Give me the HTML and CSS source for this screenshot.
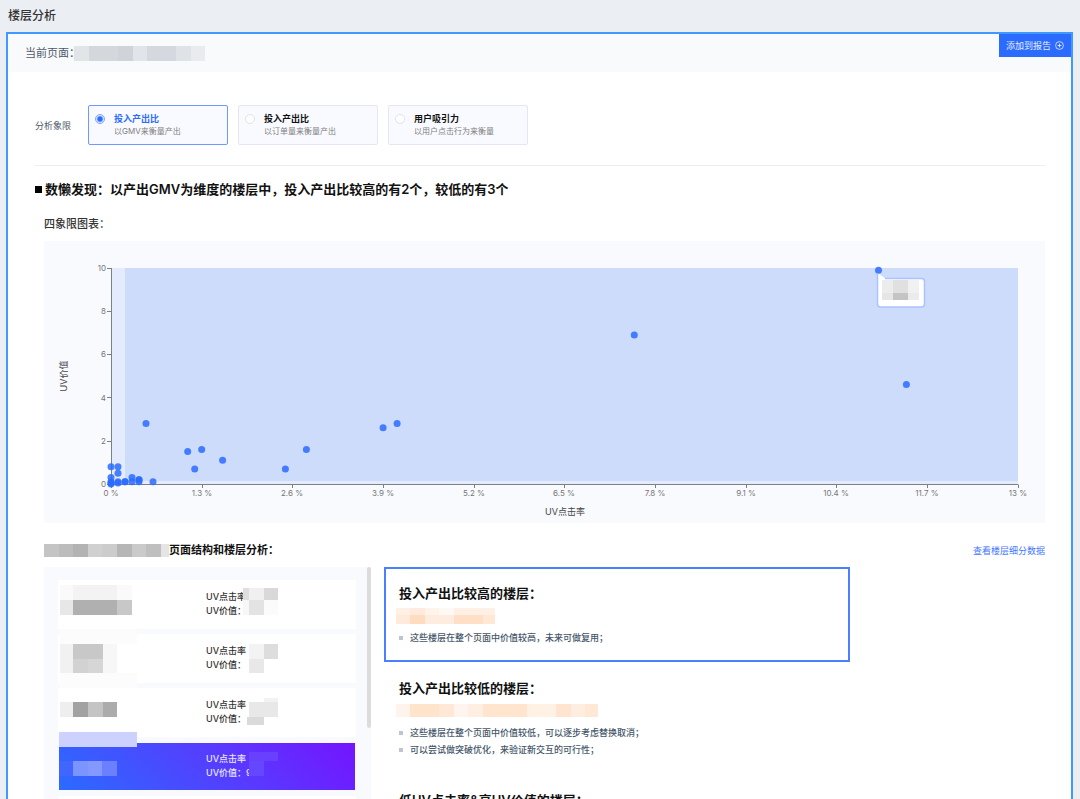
FILE: index.html
```
<!DOCTYPE html>
<html lang="zh-CN">
<head>
<meta charset="utf-8">
<title>楼层分析</title>
<link rel="stylesheet" href="styles.css">
</head>
<body>
<div class="page">
  <h1 class="page-title">楼层分析</h1>
  <main class="panel">
    <header class="panel-head">
      <div class="current">
        <span>当前页面：</span>
        <svg class="mask" width="131" height="15" shape-rendering="crispEdges" aria-hidden="true">
          <path fill="#e2e5e8" d="M0 0h15v15H0z"/><path fill="#d4d8dd" d="M15 0h29v15H15z"/><path fill="#d0d4da" d="M44 0h15v15H44z"/><path fill="#e1e4e8" d="M59 0h14v15H59z"/><path fill="#d5d9df" d="M73 0h29v15H73z"/><path fill="#dfe2e7" d="M102 0h15v15H102z"/><path fill="#e9ebee" d="M117 0h14v15H117z"/>
        </svg>
      </div>
      <button class="add" type="button">添加到报告
        <svg width="9" height="9" viewBox="0 0 9 9" fill="none" stroke="currentColor" aria-hidden="true"><circle cx="4.500" cy="4.500" r="3.900" stroke-width=".8"/><path d="M4.500 2.600v3.800M2.600 4.500h3.800" stroke-width=".9"/></svg>
      </button>
    </header>

    <div class="content">
      <div class="filters" role="radiogroup" aria-labelledby="quad">
        <span class="filters-label" id="quad">分析象限</span>
        <label class="option"><input type="radio" name="quadrant" checked><span class="option-text"><b>投入产出比</b><small>以GMV来衡量产出</small></span></label>
        <label class="option"><input type="radio" name="quadrant"><span class="option-text"><b>投入产出比</b><small>以订单量来衡量产出</small></span></label>
        <label class="option"><input type="radio" name="quadrant"><span class="option-text"><b>用户吸引力</b><small>以用户点击行为来衡量</small></span></label>
      </div>

      <h2 class="finding">数懒发现：以产出GMV为维度的楼层中，投入产出比较高的有2个，较低的有3个</h2>

      <section class="inner">
        <h3 class="sub">四象限图表：</h3>
        <svg class="chart" viewBox="0 0 1001 282" role="img" aria-label="UV点击率与UV价值四象限图">
          <rect x="67" y="27" width="907" height="216" fill="#e3ebfd"/>
          <rect x="81" y="27" width="893" height="213" fill="#cedcfc"/>
          <path class="axis" d="M67.500 27V243.500H974.500M63 27.500h4M63 70.500h4M63 113.500h4M63 156.500h4M63 200.500h4M63 243.500h4M67.500 244v3M158.500 244v3M248.500 244v3M339.500 244v3M430.500 244v3M520.500 244v3M611.500 244v3M702.500 244v3M792.500 244v3M883.500 244v3M974.500 244v3"/>
          <g class="tick end">
            <text x="62" y="30">10</text><text x="62" y="73">8</text><text x="62" y="116">6</text><text x="62" y="160">4</text><text x="62" y="203">2</text><text x="62" y="246">0</text>
          </g>
          <g class="tick mid">
            <text x="67" y="255">0 %</text><text x="158" y="255">1.3 %</text><text x="248" y="255">2.6 %</text><text x="339" y="255">3.9 %</text><text x="430" y="255">5.2 %</text><text x="520" y="255">6.5 %</text><text x="611" y="255">7.8 %</text><text x="702" y="255">9.1 %</text><text x="792" y="255">10.4 %</text><text x="883" y="255">11.7 %</text><text x="974" y="255">13 %</text>
          </g>
          <text class="axis-name" x="521" y="274">UV点击率</text>
          <text class="axis-name" transform="translate(23 135) rotate(-90)">UV价值</text>
          <g class="points">
            <circle cx="102" cy="182.500" r="3.500"/><circle cx="143.700" cy="210.600" r="3.500"/><circle cx="150.700" cy="227.900" r="3.500"/><circle cx="157.700" cy="208.400" r="3.500"/><circle cx="178.600" cy="219.200" r="3.500"/><circle cx="241.400" cy="227.900" r="3.500"/><circle cx="262.400" cy="208.400" r="3.500"/><circle cx="339.100" cy="186.800" r="3.500"/><circle cx="353.100" cy="182.500" r="3.500"/><circle cx="590.300" cy="94" r="3.500"/><circle cx="862.400" cy="143.600" r="3.500"/>
            <circle cx="67" cy="225.700" r="3.500"/><circle cx="74" cy="225.700" r="3.500"/><circle cx="74" cy="232.200" r="3.500"/><circle cx="67" cy="236.500" r="3.500"/><circle cx="67" cy="240.800" r="3.500"/><circle cx="67" cy="242" r="3.500"/><circle cx="67" cy="243" r="3.500"/><circle cx="74" cy="240.800" r="3.500"/><circle cx="74" cy="242" r="3.500"/><circle cx="81" cy="240.800" r="3.500"/><circle cx="81" cy="240.800" r="3.500"/><circle cx="88" cy="236.500" r="3.500"/><circle cx="88" cy="240.800" r="3.500"/><circle cx="95" cy="238.700" r="3.500"/><circle cx="95" cy="238.700" r="3.500"/><circle cx="95" cy="240.800" r="3.500"/><circle cx="109" cy="240.800" r="3.500"/>
          </g>
          <path d="M834 32L841 37.500H877.500a3 3 0 0 1 3 3V63a3 3 0 0 1-3 3H836.500a3 3 0 0 1-3-3V32z" fill="#fff"/>
          <path d="M841 37.500H877.500a3 3 0 0 1 3 3V63a3 3 0 0 1-3 3H836.500a3 3 0 0 1-3-3V33" fill="none" stroke="#a9c3fe" stroke-width="1.500"/>
          <g class="points"><circle cx="834.500" cy="29.200" r="3.500"/></g>
          <g shape-rendering="crispEdges">
            <path fill="#ececec" d="M838 39h11v13h-11z"/><path fill="#e0e0e0" d="M849 39h15v13h-15z"/><path fill="#f1f1f1" d="M864 39h11v13h-11z"/><path fill="#e6e6e6" d="M838 52h11v7h-11z"/><path fill="#c4c4c4" d="M849 52h15v7h-15z"/><path fill="#ebebeb" d="M864 52h11v7h-11z"/>
          </g>
        </svg>

        <div class="section-head">
          <h3 class="sub strong">
            <svg class="mask" width="125" height="13" shape-rendering="crispEdges" aria-hidden="true">
              <path fill="#c4c4c4" d="M0 0h15v13H0z"/><path fill="#bcbcbc" d="M15 0h14v13H15z"/><path fill="#b3b3b3" d="M29 0h15v13H29z"/><path fill="#d0d0d0" d="M44 0h14v13H44z"/><path fill="#ccc" d="M58 0h15v13H58z"/><path fill="#b6b6b6" d="M73 0h15v13H73z"/><path fill="#cacaca" d="M88 0h14v13H88z"/><path fill="#bfbfbf" d="M102 0h15v13H102z"/><path fill="#e5e5e5" d="M117 0h8v13h-8z"/>
            </svg>页面结构和楼层分析：</h3>
          <a class="link" href="#detail">查看楼层细分数据</a>
        </div>

        <div class="columns">
          <div class="floors">
            <ul class="floor-list">
              <li class="floor">
                <p>UV点击率<br>UV价值：</p>
                <svg class="cover" shape-rendering="crispEdges" aria-hidden="true">
                  <path fill="#fafafa" d="M2 5h13v15H2zM59 5h15v15H59z"/><path fill="#f3f3f3" d="M15 5h44v15H15z"/><path fill="#e7e7e7" d="M2 20h13v15H2z"/><path fill="#b0b0b0" d="M15 20h44v15H15z"/><path fill="#c8c8c8" d="M59 20h15v15H59z"/>
                  <path fill="#dedede" d="M185 8h6v12h-6z"/><path fill="#f0f0f0" d="M191 8h15v12h-15z"/><path fill="#d9d9d9" d="M206 8h14v12h-14z"/><path fill="#f7f7f7" d="M185 20h6v15h-6z"/><path fill="#e3e3e3" d="M191 20h15v15h-15z"/><path fill="#fbfbfb" d="M206 20h14v15h-14z"/>
                </svg>
              </li>
              <li class="floor">
                <p>UV点击率<br>UV价值：</p>
                <svg class="cover" shape-rendering="crispEdges" aria-hidden="true">
                  <path fill="#fcfcfd" d="M2-5h77v15H2zM2 39h77v15H2z"/><path fill="#f1f1f1" d="M2 10h13v29H2z"/><path fill="#c8c8c8" d="M15 10h30v15H15z"/><path fill="#f7f7f7" d="M45 10h14v29H45z"/><path fill="#d2d2d2" d="M15 25h15v14H15z"/><path fill="#d6d6d6" d="M30 25h15v14H30z"/>
                  <path fill="#f3f3f3" d="M191 10h15v15h-15z"/><path fill="#ddd" d="M206 10h14v15h-14z"/><path fill="#e8e8e8" d="M191 25h15v14h-15z"/>
                </svg>
              </li>
              <li class="floor">
                <p>UV点击率<br>UV价值：</p>
                <svg class="cover" shape-rendering="crispEdges" aria-hidden="true">
                  <path fill="#eee" d="M2 14h13v15H2z"/><path fill="#a2a2a2" d="M15 14h15v15H15z"/><path fill="#c4c4c4" d="M30 14h15v15H30z"/><path fill="#acacac" d="M45 14h14v15H45z"/>
                  <path fill="#f2f2f2" d="M206 10h14v4h-14z"/><path fill="#e8e8e8" d="M191 14h29v15h-29z"/><path fill="#dadada" d="M189 29h17v8h-17z"/>
                </svg>
              </li>
              <li class="floor active">
                <p>UV点击率<br>UV价值：9</p>
                <svg class="cover" shape-rendering="crispEdges" aria-hidden="true">
                  <path fill="#cdd1fd" d="M0-11h78v15H0z"/><path fill="#4066ff" d="M0 18h14v15H0z"/><path fill="#7b94ff" d="M14 18h15v15H14z"/><path fill="#8498ff" d="M29 18h14v15H29z"/><path fill="#6a80ff" d="M43 18h15v15H43z"/>
                  <path fill="#6a40ff" d="M190 9h29v9h-29z"/><path fill="#6447ff" d="M190 18h15v15h-15z"/>
                </svg>
              </li>
              <li class="floor"></li>
            </ul>
            <span class="thumb"></span>
          </div>

          <div class="insights">
            <section class="insight selected">
              <h4>投入产出比较高的楼层：</h4>
              <svg class="tags" height="26" shape-rendering="crispEdges" aria-hidden="true">
                <path fill="#fff0e6" d="M-3 5h14v7H-3zM55 5h41v7H55z"/><path fill="#ffeadd" d="M11 5h15v7H11z"/><path fill="#fff3ea" d="M26 5h14v7H26z"/><path fill="#fff9f4" d="M40 5h15v7H40z"/><path fill="#ffeadb" d="M-3 12h14v9H-3z"/><path fill="#ffdcc0" d="M11 12h15v9H11z"/><path fill="#ffece0" d="M26 12h29v9H26z"/><path fill="#ffe0c6" d="M55 12h29v9H55z"/><path fill="#ffe8d6" d="M84 12h12v9H84z"/>
              </svg>
              <ul><li>这些楼层在整个页面中价值较高，未来可做复用；</li></ul>
            </section>
            <section class="insight">
              <h4>投入产出比较低的楼层：</h4>
              <svg class="tags" height="26" shape-rendering="crispEdges" aria-hidden="true">
                <path fill="#fff4ec" d="M-3 6h14v13H-3z"/><path fill="#ffe4cc" d="M11 6h29v13H11z"/><path fill="#ffe8d6" d="M40 6h15v13H40z"/><path fill="#fff5ee" d="M55 6h14v13H55z"/><path fill="#ffeee2" d="M69 6h15v13H69z"/><path fill="#ffe4ce" d="M84 6h44v13H84z"/><path fill="#fff1e3" d="M128 6h29v13h-29z"/><path fill="#ffe5d0" d="M157 6h15v13h-15z"/><path fill="#ffeedf" d="M172 6h14v13h-14z"/><path fill="#ffe8d6" d="M186 6h13v13h-13z"/>
              </svg>
              <ul><li>这些楼层在整个页面中价值较低，可以逐步考虑替换取消；</li><li>可以尝试做突破优化，来验证新交互的可行性；</li></ul>
            </section>
            <section class="insight">
              <h4>低UV点击率&amp;高UV价值的楼层：</h4>
            </section>
          </div>
        </div>
      </section>
    </div>
  </main>
</div>
</body>
</html>
```
FILE: styles.css
```
* { box-sizing: border-box; }

body {
  margin: 0;
  background: #ebeff3;
  color: #111;
  font: 9px/13px Inter, "Noto Sans CJK SC", sans-serif;
}

h1, h2, h3, h4, p, ul { margin: 0; padding: 0; font-weight: 500; }
ul { list-style: none; }
svg { display: block; flex: none; }

.page {
  display: flex;
  flex-direction: column;
  height: 100vh;
  padding: 0 7px 0 6px;
  overflow: hidden;
}

.page-title {
  flex: none;
  padding: 6px 2px;
  color: #333;
  font-size: 12px;
  line-height: 20px;
}

.panel {
  flex: 1 0 auto;
  background: #fff;
  border: 2px solid #3f99ff;
}

.panel-head {
  display: flex;
  justify-content: space-between;
  align-items: flex-start;
  background: #f9fafc;
}

.current {
  display: flex;
  align-items: center;
  height: 38px;
  padding-left: 17px;
  color: #4e5969;
  font-size: 11px;
}
.current span { width: 49px; white-space: nowrap; }

.add {
  display: flex;
  align-items: center;
  gap: 4px;
  height: 23px;
  padding: 0 7px;
  border: 0;
  background: #2b6bff;
  color: #e6eeff;
  font: inherit;
}

.content { padding: 33px 26px 20px 27px; }

.filters {
  display: flex;
  align-items: center;
  gap: 10px;
  padding-bottom: 20px;
  border-bottom: 1px solid #eceef1;
}
.filters-label { width: 43px; color: #4e5969; }

.option {
  display: flex;
  align-items: flex-start;
  gap: 9px;
  width: 140px;
  padding: 6px;
  border: 1px solid #e3e7f2;
  border-radius: 2px;
  background: #f9faff;
}
.option input {
  appearance: none;
  flex: none;
  width: 10px;
  height: 10px;
  margin: 2px 0 0;
  border: 1px solid #dfe2ea;
  border-radius: 50%;
  background: #fff;
}
.option input:checked {
  border-color: #7fa5ff;
  background: radial-gradient(circle, #2b6bff 0 2px, #fff 4px);
}
.option-text { display: grid; }
.option b { font-weight: 700; }
.option small { color: #808080; font-size: 8px; }
.option:has(input:checked) { border-color: #6f99ff; }
.option:has(input:checked) b { color: #2b6bff; }

.finding {
  display: flex;
  align-items: center;
  gap: 3px;
  margin-top: 13px;
  font-size: 13px;
  font-weight: 600;
  line-height: 20px;
}
.finding::before { content: ""; width: 7px; height: 7px; background: #000; }

.inner { padding: 17px 0 0 9px; }

.sub {
  color: #333;
  font-size: 11px;
  line-height: 16px;
}
.sub.strong { display: flex; align-items: center; color: #111; font-weight: 700; }

.chart {
  width: 100%;
  margin-top: 9px;
  background: #f9fafe;
}
.axis { fill: none; stroke: #7c808a; }
.tick { fill: #777; font-size: 8px; }
.end { text-anchor: end; }
.mid { text-anchor: middle; }
.axis-name { fill: #444; font-size: 9px; text-anchor: middle; }
.points { fill: #2b6bff; fill-opacity: .85; }

.section-head {
  display: flex;
  justify-content: space-between;
  align-items: center;
  margin: 19px 0 9px;
}
.link { color: #3f76ff; text-decoration: none; }

.columns {
  display: grid;
  grid-template-columns: 327fr 466fr 182fr;
  gap: 13px;
}

.floors {
  position: relative;
  padding: 13px 15px 13px 14px;
  background: #f9fafe;
}
.floor-list { display: grid; gap: 5px; }
.floor {
  position: relative;
  height: 49px;
  padding: 10px 0 0 148px;
  background: #fff;
  color: #333;
  line-height: 14px;
}
.floor.active {
  height: 47px;
  margin: 1px;
  padding: 9px 0 0 147px;
  background: linear-gradient(45deg, #2b6bff, #5a38ff 60%, #7414ff);
  color: #e9e6ff;
}
.cover {
  position: absolute;
  top: 0;
  left: 0;
  width: 100%;
  height: 100%;
  overflow: visible;
}
.thumb {
  position: absolute;
  top: 0;
  right: 0;
  width: 4px;
  height: 161px;
  border-radius: 2px;
  background: #dcdcdc;
}

.insight {
  padding: 14px 13px;
  border: 2px solid transparent;
}
.insight.selected { border-color: #4a80ff; }
.insight h4 { font-size: 13px; font-weight: 600; line-height: 20px; }
.tags { width: 100%; overflow: visible; }
.insight li {
  display: flex;
  align-items: center;
  gap: 7px;
  color: #45566a;
  line-height: 17px;
}
.insight li::before { content: ""; width: 4px; height: 4px; background: #c0c4d0; }
```
